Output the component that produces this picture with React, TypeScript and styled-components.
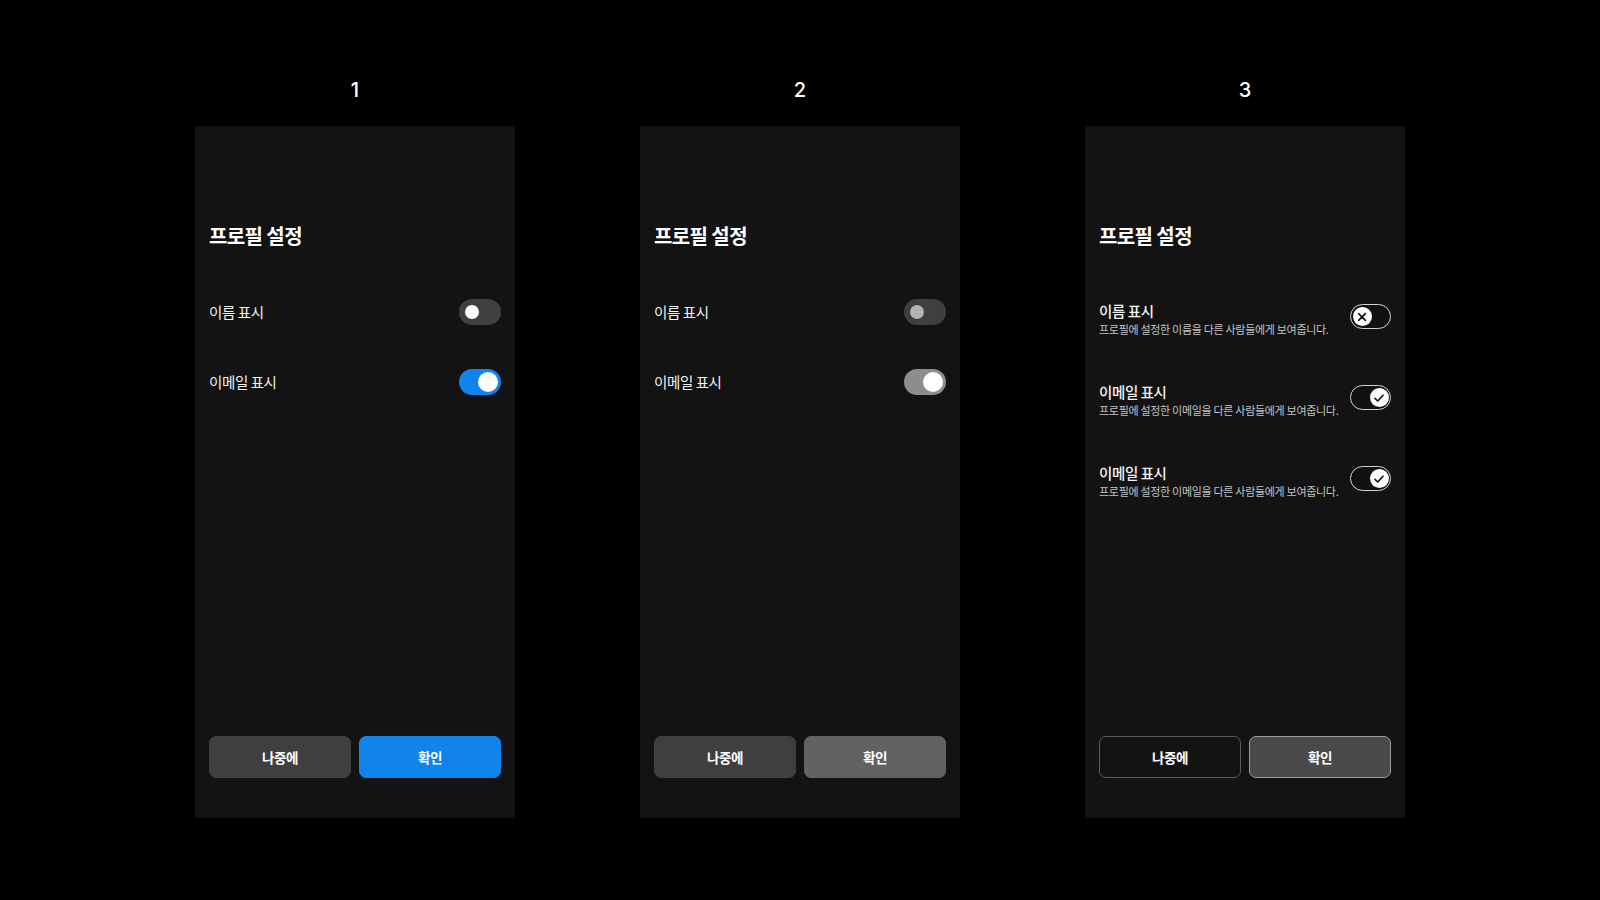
import React from "react";
import styled, { createGlobalStyle, css } from "styled-components";

const GlobalStyle = createGlobalStyle`
  html, body {
    margin: 0;
    padding: 0;
    background: #000;
  }
  body {
    font-family: "Noto Sans CJK KR", "Noto Sans", sans-serif;
    color: #fff;
  }
`;

type Variant = "blue" | "gray" | "outline";

type Item = { label: string; desc?: string; on: boolean };

const screens: { variant: Variant; items: Item[] }[] = [
  {
    variant: "blue",
    items: [
      { label: "이름 표시", on: false },
      { label: "이메일 표시", on: true },
    ],
  },
  {
    variant: "gray",
    items: [
      { label: "이름 표시", on: false },
      { label: "이메일 표시", on: true },
    ],
  },
  {
    variant: "outline",
    items: [
      { label: "이름 표시", desc: "프로필에 설정한 이름을 다른 사람들에게 보여줍니다.", on: false },
      { label: "이메일 표시", desc: "프로필에 설정한 이메일을 다른 사람들에게 보여줍니다.", on: true },
      { label: "이메일 표시", desc: "프로필에 설정한 이메일을 다른 사람들에게 보여줍니다.", on: true },
    ],
  },
];

const Switch = ({ variant, on }: { variant: Variant; on: boolean }) => {
  if (variant === "outline") {
    return (
      <OutlineTrack on={on}>
        <OutlineThumb>
          {on ? (
            <svg width="12" height="12" viewBox="0 0 12 12">
              <path d="M2 6.3 4.8 9 10 3.2" fill="none" stroke="#111" strokeWidth="1.6" strokeLinecap="round" strokeLinejoin="round" />
            </svg>
          ) : (
            <svg width="12" height="12" viewBox="0 0 12 12">
              <path d="M2.6 2.6 9.4 9.4M9.4 2.6 2.6 9.4" fill="none" stroke="#111" strokeWidth="1.6" strokeLinecap="round" />
            </svg>
          )}
        </OutlineThumb>
      </OutlineTrack>
    );
  }
  return (
    <Track variant={variant} on={on}>
      <Thumb variant={variant} on={on} />
    </Track>
  );
};

const Screen = ({ index, variant, items }: { index: number; variant: Variant; items: Item[] }) => (
  <Column>
    <Step>{index}</Step>
    <Panel>
      <Title>프로필 설정</Title>
      <List detailed={variant === "outline"}>
        {items.map((item, i) => (
          <Row key={i} detailed={!!item.desc}>
            <Texts>
              <Label strong={!!item.desc}>{item.label}</Label>
              {item.desc && <Desc>{item.desc}</Desc>}
            </Texts>
            <Switch variant={variant} on={item.on} />
          </Row>
        ))}
      </List>
      <Buttons>
        <Button variant={variant} kind="later">나중에</Button>
        <Button variant={variant} kind="ok">확인</Button>
      </Buttons>
    </Panel>
  </Column>
);

export default function App() {
  return (
    <>
      <GlobalStyle />
      <Page>
        {screens.map((s, i) => (
          <Screen key={i} index={i + 1} variant={s.variant} items={s.items} />
        ))}
      </Page>
    </>
  );
}

const Page = styled.div`
  width: 1600px;
  height: 900px;
  display: flex;
  justify-content: center;
  gap: 125px;
  padding-top: 78px;
  box-sizing: border-box;
`;

const Column = styled.div`
  display: flex;
  flex-direction: column;
  align-items: center;
  gap: 24px;
`;

const Step = styled.div`
  font-family: Inter, "Noto Sans", sans-serif;
  font-size: 20px;
  font-weight: 500;
  line-height: 24px;
`;

const Panel = styled.section`
  width: 320px;
  height: 692px;
  background: #131313;
  box-sizing: border-box;
  padding: 96px 14px 40px;
  display: flex;
  flex-direction: column;
`;

const Title = styled.h2`
  margin: 0;
  font-size: 20px;
  font-weight: 700;
  line-height: 28px;
  letter-spacing: -0.6px;
`;

const List = styled.div<{ detailed: boolean }>`
  display: flex;
  flex-direction: column;
  margin-top: ${({ detailed }) => (detailed ? "51px" : "40px")};
  gap: ${({ detailed }) => (detailed ? "33px" : "26px")};
`;

const Row = styled.div<{ detailed: boolean }>`
  display: flex;
  align-items: center;
  justify-content: space-between;
  height: ${({ detailed }) => (detailed ? "48px" : "44px")};
  ${({ detailed }) =>
    detailed &&
    css`
      align-items: flex-start;
      & > :last-child {
        margin-top: 3px;
      }
    `}
`;

const Texts = styled.div`
  display: flex;
  flex-direction: column;
`;

const Label = styled.span<{ strong: boolean }>`
  font-size: 14.5px;
  line-height: 20px;
  letter-spacing: -0.4px;
  font-weight: ${({ strong }) => (strong ? 500 : 400)};
  color: #f2f2f2;
`;

const Desc = styled.span`
  font-size: 11px;
  line-height: 16px;
  letter-spacing: -0.3px;
  color: #c4c4c4;
`;

const trackColors = {
  blue: { on: "#1184eb", off: "#3f3f3f" },
  gray: { on: "#8d8d8d", off: "#3f3f3f" },
  outline: { on: "#131313", off: "#131313" },
};

const Track = styled.div<{ variant: Variant; on: boolean }>`
  width: 42px;
  height: 26px;
  border-radius: 13px;
  flex-shrink: 0;
  display: flex;
  align-items: center;
  justify-content: ${({ on }) => (on ? "flex-end" : "flex-start")};
  padding: 0 ${({ on }) => (on ? "3px" : "6px")};
  box-sizing: border-box;
  background: ${({ variant, on }) => trackColors[variant][on ? "on" : "off"]};
`;

const Thumb = styled.div<{ variant: Variant; on: boolean }>`
  width: ${({ on }) => (on ? "20px" : "14px")};
  height: ${({ on }) => (on ? "20px" : "14px")};
  border-radius: 50%;
  background: ${({ variant, on }) => (variant === "gray" && !on ? "#b3b3b3" : "#fff")};
`;

const OutlineTrack = styled.div<{ on: boolean }>`
  width: 41px;
  height: 25px;
  border-radius: 13px;
  border: 1.5px solid #d4d4d4;
  box-sizing: border-box;
  flex-shrink: 0;
  display: flex;
  align-items: center;
  justify-content: ${({ on }) => (on ? "flex-end" : "flex-start")};
  padding: 0 1.5px;
  background: #111;
`;

const OutlineThumb = styled.div`
  width: 19px;
  height: 19px;
  border-radius: 50%;
  background: #fff;
  display: flex;
  align-items: center;
  justify-content: center;
`;

const Buttons = styled.div`
  margin-top: auto;
  display: grid;
  grid-template-columns: 1fr 1fr;
  gap: 8px;
`;

const buttonLook = {
  blue: {
    later: css`background: #3f3f3f; border: 1px solid #3f3f3f;`,
    ok: css`background: #1184eb; border: 1px solid #1184eb;`,
  },
  gray: {
    later: css`background: #3f3f3f; border: 1px solid #3f3f3f;`,
    ok: css`background: #626262; border: 1px solid #626262;`,
  },
  outline: {
    later: css`background: #131313; border: 1px solid #5a5a5a;`,
    ok: css`background: #4a4a4a; border: 1px solid #9a9a9a;`,
  },
};

const Button = styled.button<{ variant: Variant; kind: "later" | "ok" }>`
  height: 42px;
  border-radius: 7px;
  box-sizing: border-box;
  font-family: "Noto Sans CJK KR", sans-serif;
  font-size: 13.5px;
  font-weight: 700;
  letter-spacing: -0.5px;
  color: #fff;
  cursor: pointer;
  ${({ variant, kind }) => buttonLook[variant][kind]}
`;
